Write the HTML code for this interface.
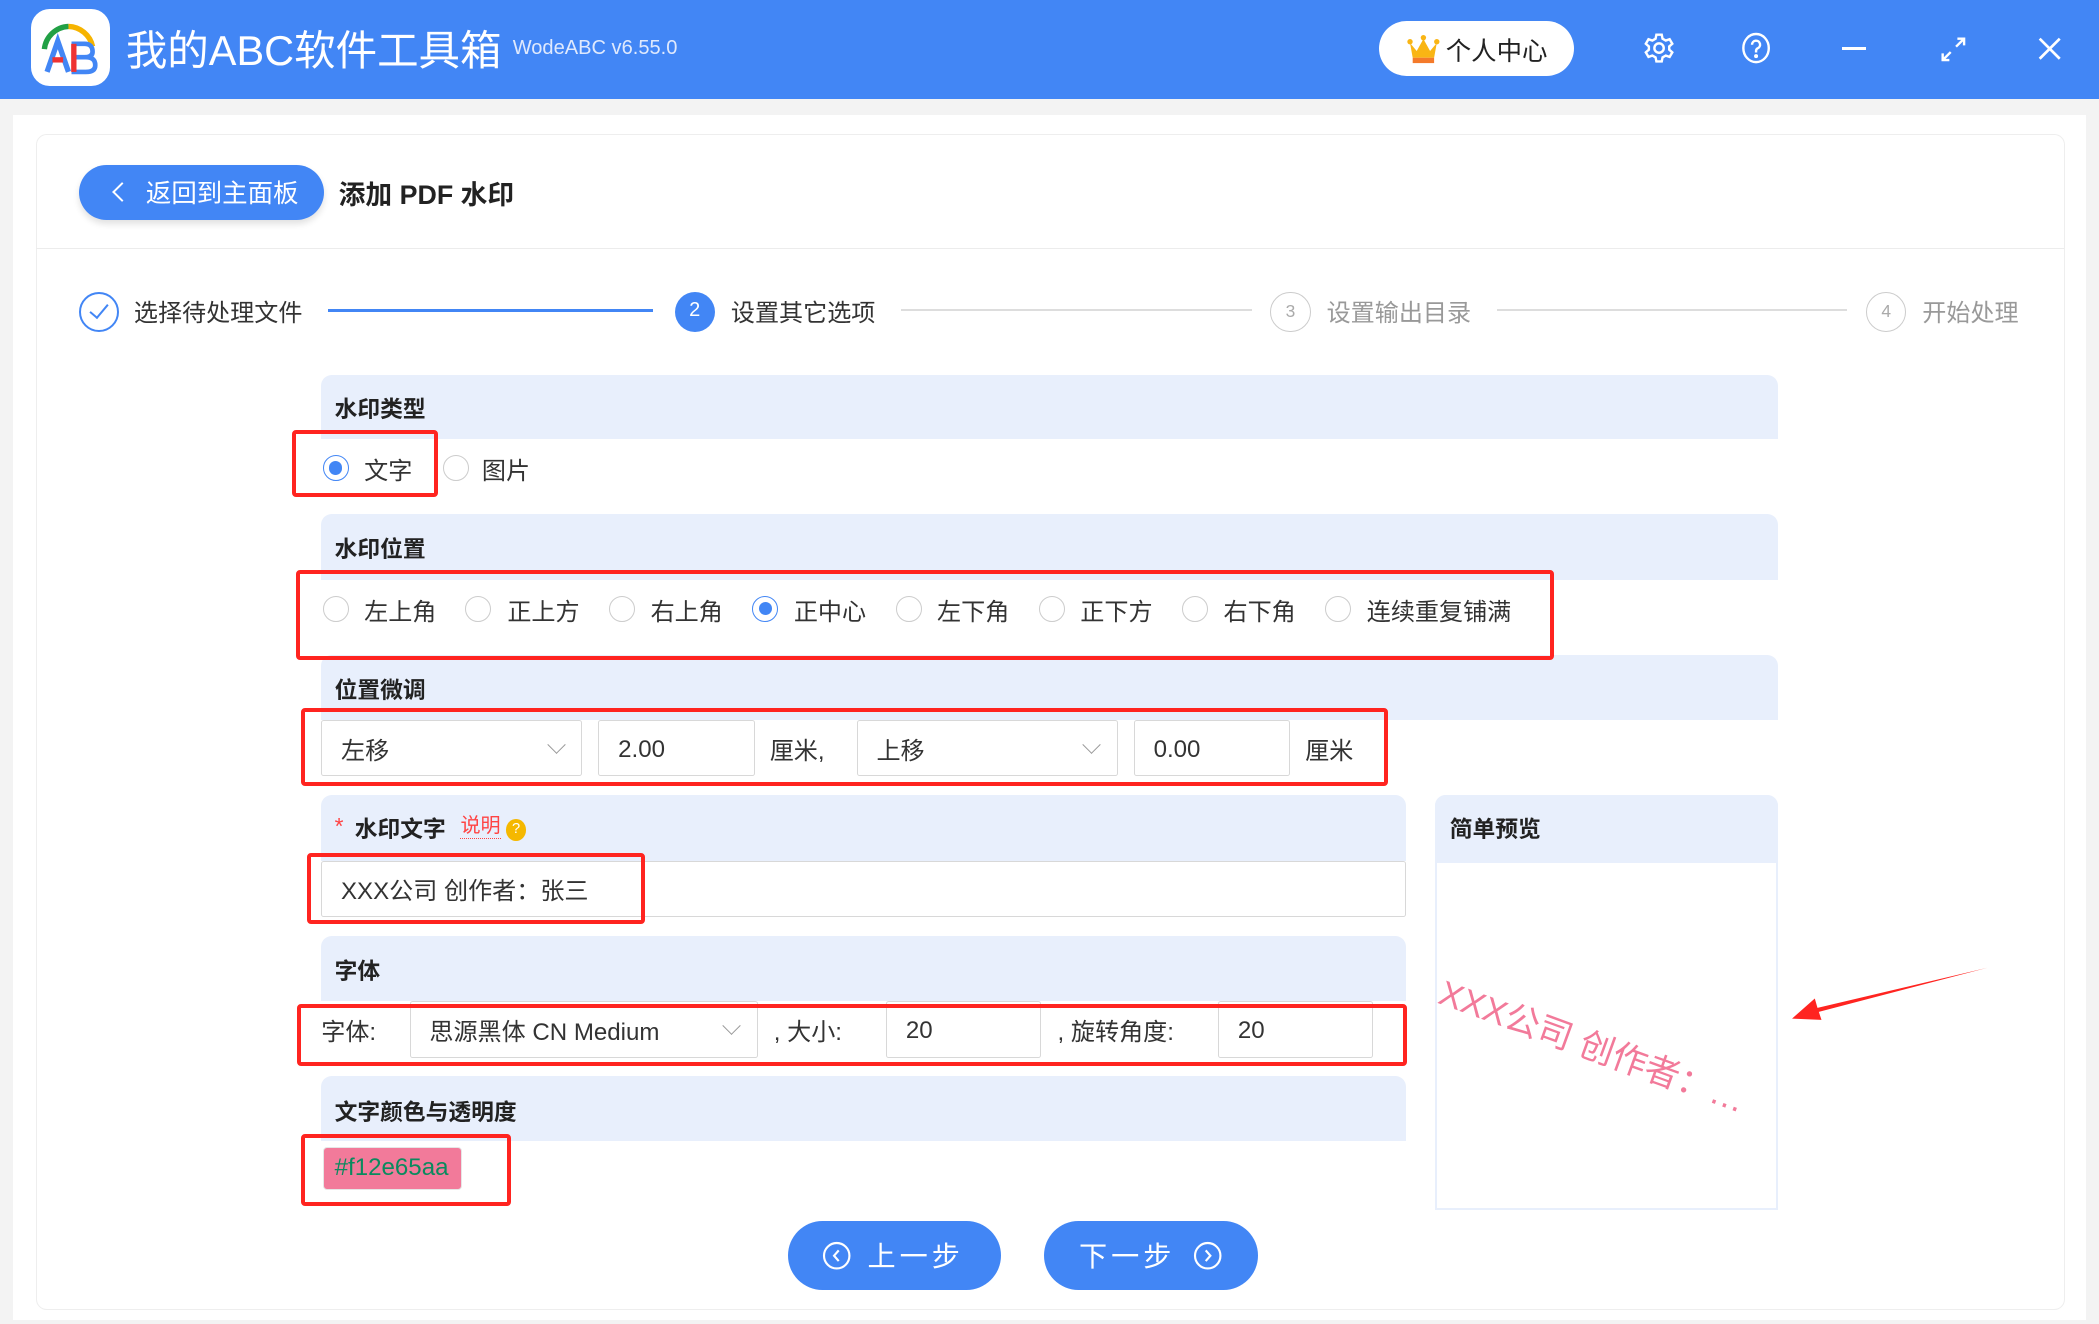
<!DOCTYPE html>
<html><head><meta charset="utf-8"><style>
html,body{margin:0;padding:0;width:2099px;height:1324px;overflow:hidden;background:#f3f3f3}
#z{zoom:1.33865;position:relative;width:1568px;height:989px;font-family:"Liberation Sans","Noto Sans CJK SC",sans-serif;color:#333}
.a{position:absolute}
.t{position:absolute;white-space:nowrap}
.sec{position:absolute;background:#e8effc;border-radius:8px 8px 0 0}
.lab{position:absolute;font-weight:bold;font-size:17px;color:#222;white-space:nowrap}
.rb{position:absolute;border:3px solid #ff2420;border-radius:3px}
.rad{position:absolute;width:18px;height:18px;border:1px solid #ccc;border-radius:50%;background:#fff}
.rad.on{border-color:#4286f5}
.rad.on:after{content:"";position:absolute;left:4px;top:4px;width:10px;height:10px;border-radius:50%;background:#4286f5}
.inp{position:absolute;background:#fff;border:1px solid #d8d8d8;border-radius:2px;font-size:18px;color:#333;box-sizing:border-box;padding-left:14px;display:flex;align-items:center}
.dd{position:absolute;right:14px;top:50%;width:9px;height:9px;border-right:1px solid #999;border-bottom:1px solid #999;transform:translateY(-75%) rotate(45deg)}
.f18{font-size:18px}
.step{position:absolute;width:30px;height:30px;border-radius:50%;box-sizing:border-box;text-align:center;line-height:28px;font-size:15px}
</style></head><body><div id="z">
<!-- title bar -->
<div class="a" style="left:0;top:0;width:1568px;height:74px;background:#4286f5"></div>
<div class="a" style="left:23px;top:7px;width:59px;height:57px;background:#fff;border-radius:14px"></div>
<svg class="a" style="left:23px;top:7px" width="59" height="57" viewBox="0 0 59 57">
<path d="M10 30 A19 19 0 0 1 28 13" stroke="#21a045" stroke-width="4" fill="none"/>
<path d="M28 13 A19 19 0 0 1 46 28" stroke="#f6b400" stroke-width="4" fill="none"/>
<path d="M12 47 L20 24 L28 47" stroke="#4286f5" stroke-width="4" fill="none"/>
<path d="M16 38 H24" stroke="#e33" stroke-width="4"/>
<path d="M32 26 H40 Q46 26 46 32 Q46 36 40 36 H32 Z M32 36 H41 Q48 36 48 42 Q48 47 41 47 H32 Z" stroke="#4286f5" stroke-width="3.5" fill="none"/>
<path d="M32 26 V47" stroke="#e33" stroke-width="4"/>
</svg>
<div class="t" style="left:94px;top:13px;font-size:31px;color:#fff">我的ABC软件工具箱</div>
<div class="t" style="left:383px;top:28px;font-size:15px;color:#dfe9fd">WodeABC v6.55.0</div>
<div class="a" style="left:1030px;top:16px;width:146px;height:41px;background:#fff;border-radius:21px"></div>
<svg class="a" style="left:1050px;top:26px" width="26" height="22" viewBox="0 0 26 22"><path d="M3 6 L8 12 L13 3 L18 12 L23 6 L21 17 H5 Z" fill="#f9b514"/><rect x="5" y="17" width="16" height="4" fill="#f47a2a"/><circle cx="3" cy="5" r="2" fill="#f9b514"/><circle cx="13" cy="2" r="2" fill="#f9b514"/><circle cx="23" cy="5" r="2" fill="#f9b514"/></svg>
<div class="t" style="left:1080px;top:24px;font-size:19px;color:#222">个人中心</div>
<svg class="a" style="left:1227px;top:24px" width="24" height="24" viewBox="0 0 24 24" fill="none" stroke="#fff" stroke-width="1.8"><path d="M10 2h4l.6 3 2.4 1.4 2.9-1 2 3.4-2.3 2v2.4l2.3 2-2 3.4-2.9-1L14.6 19l-.6 3h-4l-.6-3L7 17.6l-2.9 1-2-3.4 2.3-2v-2.4l-2.3-2 2-3.4 2.9 1L9.4 5z"/><circle cx="12" cy="12" r="3.5"/></svg>
<svg class="a" style="left:1300px;top:24px" width="24" height="24" viewBox="0 0 24 24" fill="none" stroke="#fff" stroke-width="1.8"><ellipse cx="12" cy="12" rx="9.5" ry="10.5"/><path d="M9 9.5a3 3 0 1 1 4 2.8c-.8.4-1 1-1 2v1"/><circle cx="12" cy="18" r=".6" fill="#fff"/></svg>
<div class="a" style="left:1376px;top:35px;width:18px;height:2px;background:#fff"></div>
<svg class="a" style="left:1449px;top:27px" width="20" height="20" viewBox="0 0 20 20" stroke="#fff" stroke-width="1.8" fill="none"><path d="M12 8 L18 2 M13 2h5v5 M8 12 L2 18 M2 13v5h5"/></svg>
<svg class="a" style="left:1522px;top:27px" width="19" height="19" viewBox="0 0 19 19" stroke="#fff" stroke-width="2"><path d="M2 2L17 17M17 2L2 17"/></svg>
<!-- card -->
<div class="a" style="left:10px;top:86px;width:1548px;height:900px;background:#fff"></div>
<div class="a" style="left:27px;top:100px;width:1514px;height:877px;border:1px solid #eee;border-radius:8px;background:#fff"></div>
<div class="a" style="left:27px;top:185px;width:1515px;height:1px;background:#ececec"></div>
<div class="a" style="left:59px;top:123px;width:183px;height:41px;background:#4286f5;border-radius:21px;box-shadow:0 3px 5px rgba(0,0,0,.12)"></div>
<div class="a" style="left:86px;top:138px;width:9px;height:9px;border-left:2px solid #fff;border-bottom:2px solid #fff;transform:rotate(45deg)"></div>
<div class="t" style="left:109px;top:130px;font-size:19px;color:#fff">返回到主面板</div>
<div class="t" style="left:253px;top:129px;font-size:20px;font-weight:bold;color:#222">添加 PDF 水印</div>
<!-- steps -->
<div class="step" style="left:59px;top:218px;border:1.5px solid #4286f5"></div>
<div class="a" style="left:70px;top:224px;width:6px;height:12px;border-right:1.5px solid #4286f5;border-bottom:1.5px solid #4286f5;transform:rotate(40deg)"></div>
<div class="t f18" style="left:100px;top:219px">选择待处理文件</div>
<div class="a" style="left:245px;top:231px;width:243px;height:2px;background:#4286f5"></div>
<div class="step" style="left:504px;top:218px;background:#4286f5;color:#fff">2</div>
<div class="t f18" style="left:546px;top:219px">设置其它选项</div>
<div class="a" style="left:673px;top:231px;width:262px;height:1px;background:#ddd"></div>
<div class="step" style="left:949px;top:218px;border:1px solid #ccc;color:#aaa;font-size:13px">3</div>
<div class="t f18" style="left:991px;top:219px;color:#999">设置输出目录</div>
<div class="a" style="left:1118px;top:231px;width:262px;height:1px;background:#ddd"></div>
<div class="step" style="left:1394px;top:218px;border:1px solid #ccc;color:#aaa;font-size:13px">4</div>
<div class="t f18" style="left:1436px;top:219px;color:#999">开始处理</div>
<!-- sections -->
<div class="sec" style="left:240px;top:280px;width:1088px;height:48px"></div>
<div class="lab" style="left:250px;top:292px">水印类型</div>
<div class="rad on" style="left:241px;top:340px"></div><div class="t f18" style="left:272px;top:337px">文字</div>
<div class="rad" style="left:331px;top:340px"></div><div class="t f18" style="left:360px;top:337px">图片</div>

<div class="sec" style="left:240px;top:384px;width:1088px;height:49px"></div>
<div class="lab" style="left:250px;top:397px">水印位置</div>
<div class="rad" style="left:241px;top:445px"></div><div class="t f18" style="left:272px;top:442px">左上角</div>
<div class="rad" style="left:347px;top:445px"></div><div class="t f18" style="left:379px;top:442px">正上方</div>
<div class="rad" style="left:455px;top:445px"></div><div class="t f18" style="left:486px;top:442px">右上角</div>
<div class="rad on" style="left:562px;top:445px"></div><div class="t f18" style="left:593px;top:442px">正中心</div>
<div class="rad" style="left:669px;top:445px"></div><div class="t f18" style="left:700px;top:442px">左下角</div>
<div class="rad" style="left:776px;top:445px"></div><div class="t f18" style="left:807px;top:442px">正下方</div>
<div class="rad" style="left:883px;top:445px"></div><div class="t f18" style="left:914px;top:442px">右下角</div>
<div class="rad" style="left:990px;top:445px"></div><div class="t f18" style="left:1021px;top:442px">连续重复铺满</div>

<div class="sec" style="left:240px;top:489px;width:1088px;height:49px"></div>
<div class="lab" style="left:250px;top:502px">位置微调</div>
<div class="inp" style="left:240px;top:538px;width:195px;height:42px">左移<span class="dd"></span></div>
<div class="inp" style="left:447px;top:538px;width:117px;height:42px;padding-top:2px">2.00</div>
<div class="t f18" style="left:575px;top:546px">厘米,</div>
<div class="inp" style="left:640px;top:538px;width:195px;height:42px">上移<span class="dd"></span></div>
<div class="inp" style="left:847px;top:538px;width:117px;height:42px;padding-top:2px">0.00</div>
<div class="t f18" style="left:975px;top:546px">厘米</div>

<div class="sec" style="left:240px;top:594px;width:810px;height:49px"></div>
<div class="t" style="left:250px;top:607px;font-size:17px;color:#f44">*</div>
<div class="lab" style="left:265px;top:606px">水印文字</div>
<div class="t" style="left:344px;top:609px;font-size:15px;color:#f44;border-bottom:1px dotted #f44;line-height:17px">说明</div>
<div class="a" style="left:378px;top:612px;width:15px;height:16px;border-radius:50%;background:#f5b800;color:#fff;font-size:11px;text-align:center;line-height:16px">?</div>
<div class="inp" style="left:240px;top:643px;width:810px;height:42px">XXX公司 创作者：张三</div>

<div class="sec" style="left:240px;top:699px;width:810px;height:49px"></div>
<div class="lab" style="left:250px;top:712px">字体</div>
<div class="a" style="left:240px;top:748px;width:810px;height:42px;background:#fff"></div>
<div class="t f18" style="left:240px;top:756px">字体:</div>
<div class="inp" style="left:306px;top:748px;width:260px;height:42px">思源黑体 CN Medium<span class="dd"></span></div>
<div class="t f18" style="left:578px;top:756px">, 大小:</div>
<div class="inp" style="left:662px;top:748px;width:116px;height:42px;padding-top:2px">20</div>
<div class="t f18" style="left:790px;top:756px">, 旋转角度:</div>
<div class="inp" style="left:910px;top:748px;width:116px;height:42px;padding-top:2px">20</div>

<div class="sec" style="left:240px;top:804px;width:810px;height:48px"></div>
<div class="lab" style="left:250px;top:817px">文字颜色与透明度</div>
<div class="a" style="left:241px;top:857px;width:104px;height:32px;background:#f27a9a;border-radius:3px;border:1px solid #e6e6e6;box-sizing:border-box"></div>
<div class="t" style="left:250px;top:862px;font-size:18px;color:#0a8a5e">#f12e65aa</div>

<!-- preview -->
<div class="a" style="left:1072px;top:594px;width:256px;height:310px;border:2px solid #e8effc;box-sizing:border-box;border-radius:8px 8px 0 0;overflow:hidden">
<div class="t" style="left:10px;top:126px;font-size:26px;color:#f27a9a;transform:rotate(20deg);transform-origin:0 0">XXX公司 创作者：…</div>
</div>
<div class="sec" style="left:1072px;top:594px;width:256px;height:51px"></div>
<div class="lab" style="left:1083px;top:606px">简单预览</div>

<!-- buttons -->
<div class="a" style="left:589px;top:912px;width:159px;height:52px;background:#4286f5;border-radius:26px"></div>
<svg class="a" style="left:614px;top:927px" width="22" height="22" viewBox="0 0 22 22" fill="none" stroke="#fff" stroke-width="1.6"><circle cx="11" cy="11" r="9.5"/><path d="M12.5 7 L9 11 L12.5 15"/></svg>
<div class="t" style="left:648px;top:922px;font-size:21px;color:#fff;letter-spacing:3px">上一步</div>
<div class="a" style="left:780px;top:912px;width:160px;height:52px;background:#4286f5;border-radius:26px"></div>
<div class="t" style="left:806px;top:922px;font-size:21px;color:#fff;letter-spacing:3px">下一步</div>
<svg class="a" style="left:891px;top:927px" width="22" height="22" viewBox="0 0 22 22" fill="none" stroke="#fff" stroke-width="1.6"><circle cx="11" cy="11" r="9.5"/><path d="M9.5 7 L13 11 L9.5 15"/></svg>

<!-- red highlight boxes -->
<div class="rb" style="left:218px;top:321px;width:103px;height:44px"></div>
<div class="rb" style="left:221px;top:426px;width:934px;height:61px"></div>
<div class="rb" style="left:225px;top:529px;width:806px;height:52px"></div>
<div class="rb" style="left:229px;top:637px;width:247px;height:47px"></div>
<div class="rb" style="left:222px;top:750px;width:823px;height:40px"></div>
<div class="rb" style="left:225px;top:847px;width:151px;height:48px"></div>
<svg class="a" style="left:1330px;top:715px" width="160" height="55" viewBox="0 0 160 55"><path d="M155 8 L28 38 L26 31 L9 46 L31 47 L29 41 Z" fill="#ff2420"/></svg>
</div></body></html>
